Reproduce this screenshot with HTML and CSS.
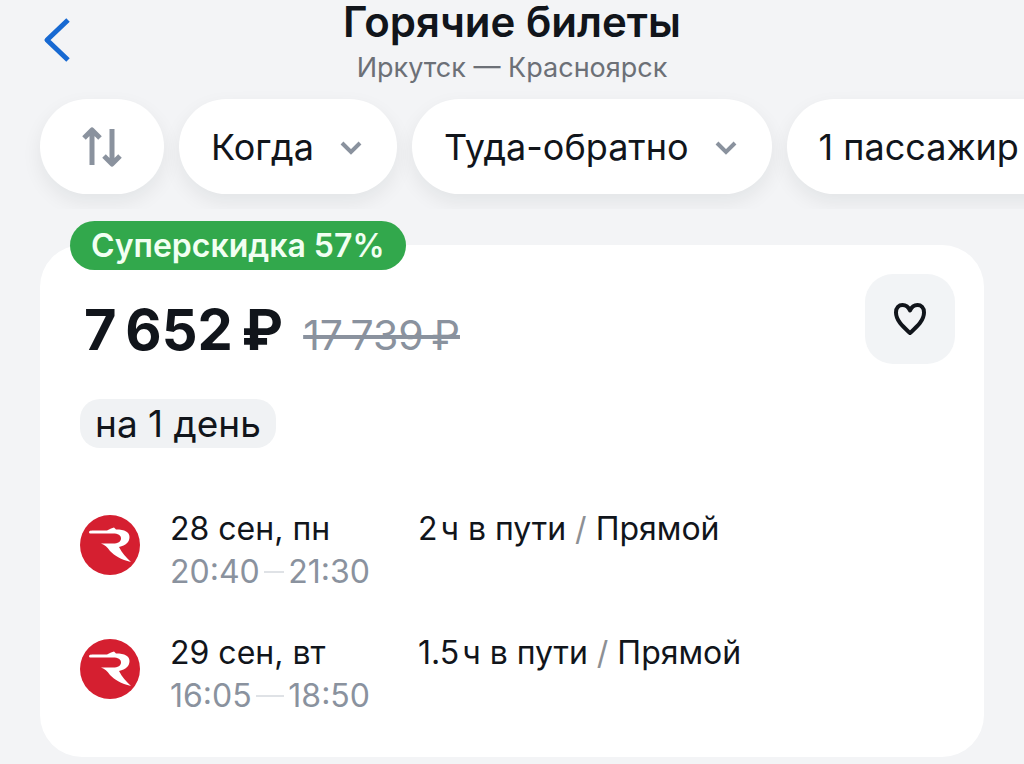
FILE: index.html
```html
<!DOCTYPE html>
<html lang="ru">
<head>
<meta charset="utf-8">
<meta name="viewport" content="width=device-width, initial-scale=1">
<title>Горячие билеты</title>
<link rel="stylesheet" href="styles.css">
</head>
<body>
<svg class="sprite" aria-hidden="true">
  <symbol id="chevron" viewBox="0 0 24 16"><path d="M3 4l9 9 9-9" fill="none" stroke="currentColor" stroke-width="4"/></symbol>
  <symbol id="airline" viewBox="0 0 60 60">
    <circle cx="30" cy="30" r="30" fill="#d51f30"/>
    <path d="M9 17C9 15.500 12 15.500 16 15.500L27 15.500L31 13.500L34 12.500L36 14.500C45 14.500 49.500 17 49.500 22C49.500 27 46 30.500 39 32C42 38 46 42 51 47C41 45 34 40 30 36C27 32 25 30 21 28.500L33 28.500C38 28.500 41 26.500 41 23.500C41 20 38 18.500 33 18.500L11 18.500C9.500 18.500 9 18 9 17Z" fill="#fff"/>
  </symbol>
</svg>

<header class="header">
  <button class="back" type="button" aria-label="Назад">
    <svg viewBox="0 0 28 46" width="28" height="46"><path d="M25 3L4 23l21 20" fill="none" stroke="currentColor" stroke-width="5" stroke-linejoin="round"/></svg>
  </button>
  <div class="heading">
    <h1 class="title">Горячие билеты</h1>
    <p class="route">Иркутск — Красноярск</p>
  </div>
</header>

<nav class="filters" aria-label="Фильтры">
  <button class="pill pill-sort" type="button" aria-label="Сортировка">
    <svg viewBox="0 0 42 42" width="42" height="42"><path d="M11 39V5M3 12l8-8 8 8M31 3v34M23 30l8 8 8-8" fill="none" stroke="currentColor" stroke-width="5" stroke-linejoin="round"/></svg>
  </button>
  <button class="pill" type="button">Когда<svg class="chevron"><use href="#chevron"/></svg></button>
  <button class="pill" type="button">Туда-обратно<svg class="chevron"><use href="#chevron"/></svg></button>
  <button class="pill" type="button">1 пассажир<svg class="chevron"><use href="#chevron"/></svg></button>
</nav>

<main class="content">
  <article class="ticket">
    <span class="badge">Суперскидка 57%</span>
    <div class="top">
      <div class="prices">
        <strong class="price">7&#8201;652&#8201;₽</strong>
        <s class="old-price">17&#8201;739&#8201;₽</s>
      </div>
      <button class="like" type="button" aria-label="В избранное">
        <svg viewBox="0 0 34 34" width="34" height="34"><path d="M17 31C11 25.500 3 19 3 10.500C3 5.500 6 3 9.500 3C13 3 15.500 5 17 8.500C18.500 5 21 3 24.500 3C28 3 31 5.500 31 10.500C31 19 23 25.500 17 31Z" fill="none" stroke="currentColor" stroke-width="4" stroke-linejoin="round"/></svg>
      </button>
    </div>
    <span class="duration">на 1 день</span>
    <ul class="flights">
      <li class="flight">
        <svg class="logo"><use href="#airline"/></svg>
        <div class="when">
          <div class="date">28 сен, пн</div>
          <div class="times"><span>20:40</span><span class="dash"></span><span>21:30</span></div>
        </div>
        <div class="info">2&#8202;ч в пути <span class="slash">/</span> Прямой</div>
      </li>
      <li class="flight">
        <svg class="logo"><use href="#airline"/></svg>
        <div class="when">
          <div class="date">29 сен, вт</div>
          <div class="times"><span>16:05</span><span class="dash"></span><span>18:50</span></div>
        </div>
        <div class="info">1.5&#8202;ч в пути <span class="slash">/</span> Прямой</div>
      </li>
    </ul>
  </article>
</main>
</body>
</html>
```
FILE: styles.css
```css
* {
  box-sizing: border-box;
}

body {
  margin: 0;
  background: #f3f4f6;
  color: #11151b;
  font-family: Inter, "Noto Sans", sans-serif;
  font-size: 32px;
}

button {
  margin: 0;
  padding: 0;
  border: 0;
  background: none;
  color: inherit;
  font: inherit;
  cursor: pointer;
}

svg {
  display: block;
  flex: none;
}

.sprite {
  position: absolute;
  width: 0;
  height: 0;
}

.header {
  display: grid;
  grid-template-columns: 60px 1fr 60px;
  padding: 0 43px;
}

.back {
  align-self: start;
  padding-top: 17px;
  color: #1769d2;
}

.heading {
  text-align: center;
}

.title {
  margin: 0;
  font-size: 42px;
  font-weight: 600;
  line-height: 44px;
}

.route {
  margin: 0;
  padding: 6px 0 4px;
  color: #6c7077;
  font-size: 27px;
  line-height: 36px;
}

.filters {
  display: flex;
  gap: 15px;
  padding: 9px 40px 15px;
  overflow: hidden;
}

.pill {
  display: flex;
  flex: none;
  align-items: center;
  gap: 25px;
  height: 95px;
  padding: 0 34px 0 32px;
  border-radius: 48px;
  background: #fff;
  box-shadow: 0 8px 20px rgba(20, 25, 35, 0.07);
  font-size: 36px;
  white-space: nowrap;
}

.pill-sort {
  padding: 0 41px;
  color: #8a929e;
}

.chevron {
  width: 24px;
  height: 16px;
  color: #8a929e;
}

.content {
  padding: 36px 40px 7px;
}

.ticket {
  position: relative;
  padding: 29px 29px 40px 40px;
  border-radius: 42px;
  background: #fff;
}

.badge {
  position: absolute;
  top: -24px;
  left: 30px;
  padding: 0 21px;
  border-radius: 25px;
  background: #32a84c;
  color: #f1fff2;
  font-size: 32px;
  font-weight: 600;
  line-height: 49px;
}

.top {
  display: flex;
  justify-content: space-between;
}

.prices {
  display: flex;
  align-items: baseline;
  gap: 20px;
  padding: 22px 4px 0;
}

.price {
  font-size: 56px;
  font-weight: 700;
  line-height: 68px;
}

.old-price {
  color: #8a929e;
  font-size: 41px;
}

.like {
  display: grid;
  place-items: center;
  width: 90px;
  height: 90px;
  border-radius: 28px;
  background: #f2f4f6;
}

.duration {
  display: inline-block;
  margin-top: 35px;
  padding: 0 15px;
  border-radius: 20px;
  background: #f0f2f4;
  font-size: 37px;
  line-height: 49px;
}

.flights {
  display: grid;
  gap: 38px;
  margin: 0;
  padding: 59px 0 0;
  list-style: none;
}

.flight {
  display: grid;
  grid-template-columns: 60px 200px 1fr;
  column-gap: 30px;
  line-height: 43px;
}

.logo {
  width: 60px;
  height: 60px;
  margin-top: 8px;
}

.times {
  display: flex;
  align-items: center;
  gap: 4px;
  color: #8a929e;
}

.dash {
  flex: 1;
  height: 2px;
  background: #dfe2e6;
}

.info {
  padding-left: 18px;
}

.slash {
  color: #8d9094;
}
```
